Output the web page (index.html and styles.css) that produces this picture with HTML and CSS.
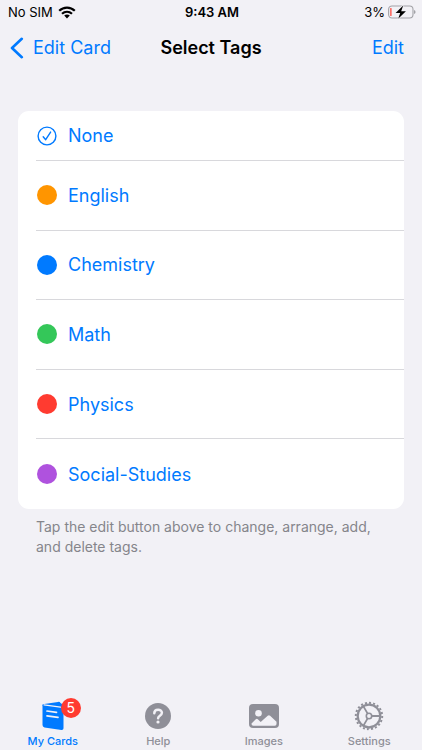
FILE: index.html
```html
<!DOCTYPE html>
<html lang="en">
<head>
<meta charset="utf-8">
<meta name="viewport" content="width=device-width, initial-scale=1">
<title>Select Tags</title>
<link rel="stylesheet" href="styles.css">
</head>
<body>
<div class="app">
  <div class="status">
    <div class="carrier">No SIM
      <svg width="18" height="13" viewBox="0 0 18 13" fill="none" stroke="#000" stroke-width="2.2" aria-hidden="true"><path d="M1.2 4.8C5.6.5 12.4.5 16.8 4.8M4 7.8c2.9-2.7 7.1-2.7 10 0"/><path d="M6.2 9.6c1.6-1.4 4-1.4 5.600 0L9 12.500z" fill="#000" stroke="none"/></svg>
    </div>
    <div class="time">9:43 AM</div>
    <div class="power">3%
      <svg width="28" height="14" viewBox="0 0 28 14" aria-hidden="true"><rect x=".6" y="1" width="24.4" height="12" rx="3.4" fill="none" stroke="#a2a2a7" stroke-width="1.1"/><path d="M26 5v4q1.600-.5 1.600-2T26 5" fill="#a2a2a7"/><rect x="2.3" y="3" width="1.2" height="8" rx=".6" fill="#ff3b30"/><path d="M15.2.4 7.600 7.900h4.600l-2 5.900 7.700-7.600h-4.700z" fill="#000" stroke="#f2f1f6" stroke-width="1.2" paint-order="stroke"/></svg>
    </div>
  </div>
  <header class="nav">
    <a class="back" href="#card"><svg width="14" height="22" viewBox="0 0 14 22" fill="none" stroke="currentColor" stroke-width="2.6" stroke-linecap="round" stroke-linejoin="round" aria-hidden="true"><path d="M11.8 1.8 2 11l9.8 9.2"/></svg>Edit Card</a>
    <h1>Select Tags</h1>
    <button class="edit" type="button">Edit</button>
  </header>
  <main>
    <ul class="tags">
      <li><button type="button"><svg width="20" height="20" viewBox="0 0 20 20" fill="none" stroke="currentColor" stroke-width="1.4" stroke-linecap="round" stroke-linejoin="round" aria-hidden="true"><circle cx="10" cy="10" r="8.9"/><path d="m6.2 10.7 2.5 3 4.900-7.600"/></svg>None</button></li>
      <li><button type="button"><span class="dot orange"></span>English</button></li>
      <li><button type="button"><span class="dot blue"></span>Chemistry</button></li>
      <li><button type="button"><span class="dot green"></span>Math</button></li>
      <li><button type="button"><span class="dot red"></span>Physics</button></li>
      <li><button type="button"><span class="dot purple"></span>Social-Studies</button></li>
    </ul>
    <p class="note">Tap the edit button above to change, arrange, add, and delete tags.</p>
  </main>
  <nav class="tabs">
    <a class="active" href="#cards"><span class="icon"><svg width="26" height="30" viewBox="0 0 26 30" aria-hidden="true"><path d="M2.600 3.300 18 .9q2-.2 2.500 1.100L23.500 4v6L2.600 5z" fill="#007aff"/><path d="M4.500 3.800 21.500 6q2 .4 2 2.400v18.800q0 2-2 1.800l-17-2.600q-2-.3-2-2.300V4.300z" fill="#007aff"/><path d="m4 3.900 16.500 2.200" fill="none" stroke="#f2f1f6" stroke-width="1.200" stroke-linecap="round"/><path d="m7 10 9.500 1.400M7 14.800l11 1.600" stroke="#f2f1f6" stroke-width="1.700" stroke-linecap="round"/></svg><span class="badge">5</span></span>My Cards</a>
    <a href="#help"><span class="icon"><svg width="26" height="26" viewBox="0 0 26 26" aria-hidden="true"><circle cx="13" cy="13" r="13" fill="#8f8f98"/><path d="M9.300 10.200c0-4.500 7.600-4.500 7.600-.4 0 2.900-3.800 2.900-3.800 5.400" fill="none" stroke="#f2f1f6" stroke-width="2.500" stroke-linecap="round"/><circle cx="13" cy="19" r="1.600" fill="#f2f1f6"/></svg></span>Help</a>
    <a href="#images"><span class="icon"><svg width="30" height="24" viewBox="0 0 30 24" aria-hidden="true"><rect width="30" height="24" rx="4" fill="#8f8f98"/><circle cx="9.500" cy="9.200" r="3.300" fill="#f2f1f6"/><path d="M2.500 19.500 6.800 15.300q1-1 2 0l2.900 2.700 7-6.300q1.200-1 2.400 0l6.400 6v2.200q0 1.800-1.800 1.800H4.300q-1.800 0-1.800-1.600z" fill="#f2f1f6"/></svg></span>Images</a>
    <a href="#settings"><span class="icon"><svg width="30" height="30" viewBox="-15 -15 30 30" fill="none" stroke="#8f8f98" aria-hidden="true"><circle r="11.300" stroke-width="2.200"/><circle r="13.200" stroke-width="2" pathLength="40" stroke-dasharray="1 1"/><circle r="2.700" stroke-width="1.600"/><path d="M3 0h8M-1.500-2.600l-4.200-7.300M-1.500 2.600l-4.200 7.300" stroke-width="1.800"/></svg></span>Settings</a>
  </nav>
</div>
</body>
</html>
```
FILE: styles.css
```css
* { box-sizing: border-box; }
body {
  margin: 0;
  background: #f2f1f6;
  color: #000;
  font-family: Inter, "Liberation Sans", sans-serif;
}
a, button { color: #007aff; text-decoration: none; }
button { padding: 0; border: 0; background: none; font: inherit; cursor: pointer; }
svg { display: block; flex: none; }
.app { min-height: 100vh; display: flex; flex-direction: column; }
.status, .nav {
  display: grid;
  grid-template-columns: 1fr auto 1fr;
  align-items: center;
}
.status { height: 24px; padding: 0 6px 0 8px; font-size: 13px; }
.carrier, .power { display: flex; align-items: center; gap: 5px; }
.power { justify-content: flex-end; gap: 3px; }
.time { font-weight: 600; }
.nav { height: 47px; padding: 0 10px; font-size: 18px; }
.back { display: flex; align-items: center; gap: 9px; }
.nav h1 { margin: 0; font-size: 18px; font-weight: 600; }
.edit { justify-self: end; padding: 0 8px; }
main { flex: 1; padding: 40px 18px 0; }
.tags {
  display: grid;
  grid-template-rows: 50px repeat(5, 1fr);
  min-height: 398px;
  margin: 0;
  padding: 0 0 0 18px;
  list-style: none;
  background: #fff;
  border-radius: 11px;
}
.tags li { border-bottom: 1px solid #d8d8dc; }
.tags li:last-child { border-bottom: 0; }
.tags button {
  display: flex;
  align-items: center;
  gap: 11px;
  width: 100%;
  height: 100%;
  padding-left: 1px;
  font-size: 18px;
  text-align: left;
}
.dot { width: 20px; height: 20px; border-radius: 50%; }
.orange { background: #ff9500; }
.blue { background: #007aff; }
.green { background: #34c759; }
.red { background: #ff3b30; }
.purple { background: #af52de; }
.note { margin: 8px 18px 0; color: #85858b; font-size: 14px; line-height: 20px; }
.tabs { display: grid; grid-template-columns: repeat(4, 1fr); height: 55px; }
.tabs a {
  display: flex;
  flex-direction: column;
  align-items: center;
  gap: 3px;
  color: #8f8f98;
  font-size: 11px;
  font-weight: 500;
  line-height: 14px;
}
.tabs .active { color: #007aff; }
.icon { position: relative; display: flex; align-items: center; height: 36px; padding-top: 6px; }
.badge {
  position: absolute;
  top: 3px;
  left: 21px;
  width: 20px;
  height: 20px;
  border-radius: 50%;
  background: #ff3b30;
  color: #fff;
  font-size: 14px;
  font-weight: 400;
  line-height: 20px;
  text-align: center;
}
```
